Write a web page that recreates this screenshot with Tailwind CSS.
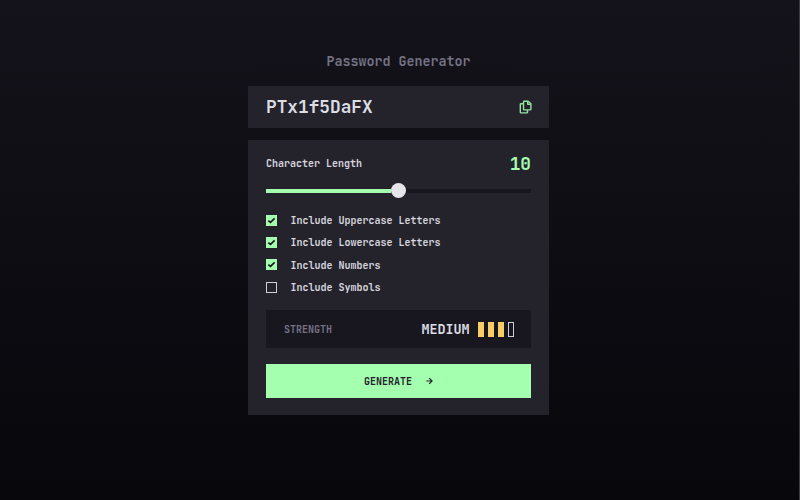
<!DOCTYPE html>
<html lang="en">
<head>
<meta charset="utf-8">
<title>Password Generator</title>
<script src="https://cdn.jsdelivr.net/npm/@tailwindcss/browser@4"></script>
</head>
<body class="h-[500px] overflow-hidden border-r border-[#3c3c3e] bg-linear-to-b from-[#14131b] to-[#08070b] font-['JetBrains_Mono','DejaVu_Sans_Mono',monospace] font-bold">
<main class="ml-[248px] w-[301px] pt-[51px]">
  <h1 class="h-[35px] text-center text-[13.35px] leading-[20px] text-[#757284]">Password Generator</h1>
  <section class="flex h-[41.5px] items-center justify-between bg-[#24232c] pl-[18px] pr-[17px]">
    <span class="text-[17.8px] leading-[24px] text-[#dddce3]">PTx1f5DaFX</span>
    <svg class="h-[14px] w-[13px]" viewBox="0 0 13 14" fill="none" stroke="#93e29f" stroke-width="1.4" stroke-linejoin="round">
      <path d="M5.2 1.2h4l2.7 2.6v5.4a.7.7 0 0 1-.7.7h-6a.7.7 0 0 1-.7-.7V1.9a.7.7 0 0 1 .7-.7Z"/>
      <path d="M8.7 1.3v3h3.1M4.4 3.8H2a.7.7 0 0 0-.7.7v7.7c0 .4.3.7.7.7h5.8c.4 0 .7-.3.7-.7V10"/>
    </svg>
  </section>
  <section class="mt-[12.5px] h-[274.5px] bg-[#24232c] px-[18px] pt-[12px]">
    <div class="flex h-6 items-center justify-between">
      <span class="pb-px text-[10px] text-[#d6d4dd]">Character Length</span>
      <span class="text-[17.8px] leading-[24px] text-[#a4ffaf]">10</span>
    </div>
    <div class="mt-[7px] flex h-[15px] items-center">
      <div class="h-1 w-[125px] bg-[#a4ffaf]"></div>
      <div class="size-[15px] rounded-full bg-[#e6e5ea]"></div>
      <div class="h-1 flex-1 bg-[#18171f]"></div>
    </div>
    <ul class="mt-[11.5px] text-[10px] leading-[22.4px] text-[#d6d4dd]">
      <li class="flex h-[22.4px] items-center gap-[13.4px]">
        <svg class="-mt-px size-[11px]" viewBox="0 0 11 11"><path fill="#a4ffaf" d="M0 0h11v11H0z"/><path fill="none" stroke="#18171f" stroke-width="1.7" d="m2.3 5.6 2.2 1.7 4.1-3.9"/></svg>
        <span class="pt-px">Include Uppercase Letters</span>
      </li>
      <li class="flex h-[22.4px] items-center gap-[13.4px]">
        <svg class="-mt-px size-[11px]" viewBox="0 0 11 11"><path fill="#a4ffaf" d="M0 0h11v11H0z"/><path fill="none" stroke="#18171f" stroke-width="1.7" d="m2.3 5.6 2.2 1.7 4.1-3.9"/></svg>
        <span class="pt-px">Include Lowercase Letters</span>
      </li>
      <li class="flex h-[22.4px] items-center gap-[13.4px]">
        <svg class="-mt-px size-[11px]" viewBox="0 0 11 11"><path fill="#a4ffaf" d="M0 0h11v11H0z"/><path fill="none" stroke="#18171f" stroke-width="1.7" d="m2.3 5.6 2.2 1.7 4.1-3.9"/></svg>
        <span class="pt-px">Include Numbers</span>
      </li>
      <li class="flex h-[22.4px] items-center gap-[13.4px]">
        <span class="-mt-px size-[11px] border border-[#d0ced6]"></span>
        <span class="pt-px">Include Symbols</span>
      </li>
    </ul>
    <div class="mt-[11px] flex h-[37.5px] items-center justify-between bg-[#18171f] pt-px pl-[18px] pr-[17px]">
      <span class="text-[10px] text-[#757284]">STRENGTH</span>
      <div class="flex items-center">
        <span class="text-[13.35px] text-[#dddce3]">MEDIUM</span>
        <div class="ml-[8.5px] flex gap-1">
          <div class="h-[15px] w-[6px] bg-[#f8cd65]"></div>
          <div class="h-[15px] w-[6px] bg-[#f8cd65]"></div>
          <div class="h-[15px] w-[6px] bg-[#f8cd65]"></div>
          <div class="h-[15px] w-[6px] border border-[#d0ced6]"></div>
        </div>
      </div>
    </div>
    <button class="mt-[16.5px] flex h-[34px] w-full items-center justify-center gap-[14px] bg-[#a4ffaf] text-[10px] text-[#24232c]">
      <span>GENERATE</span>
      <svg class="h-[8px] w-[7px]" viewBox="0 0 7 8" fill="none" stroke="#24232c" stroke-width="1.2"><path d="M.3 4h5.6M3.2 1.1 6.1 4 3.2 6.9"/></svg>
    </button>
  </section>
</main>
</body>
</html>
